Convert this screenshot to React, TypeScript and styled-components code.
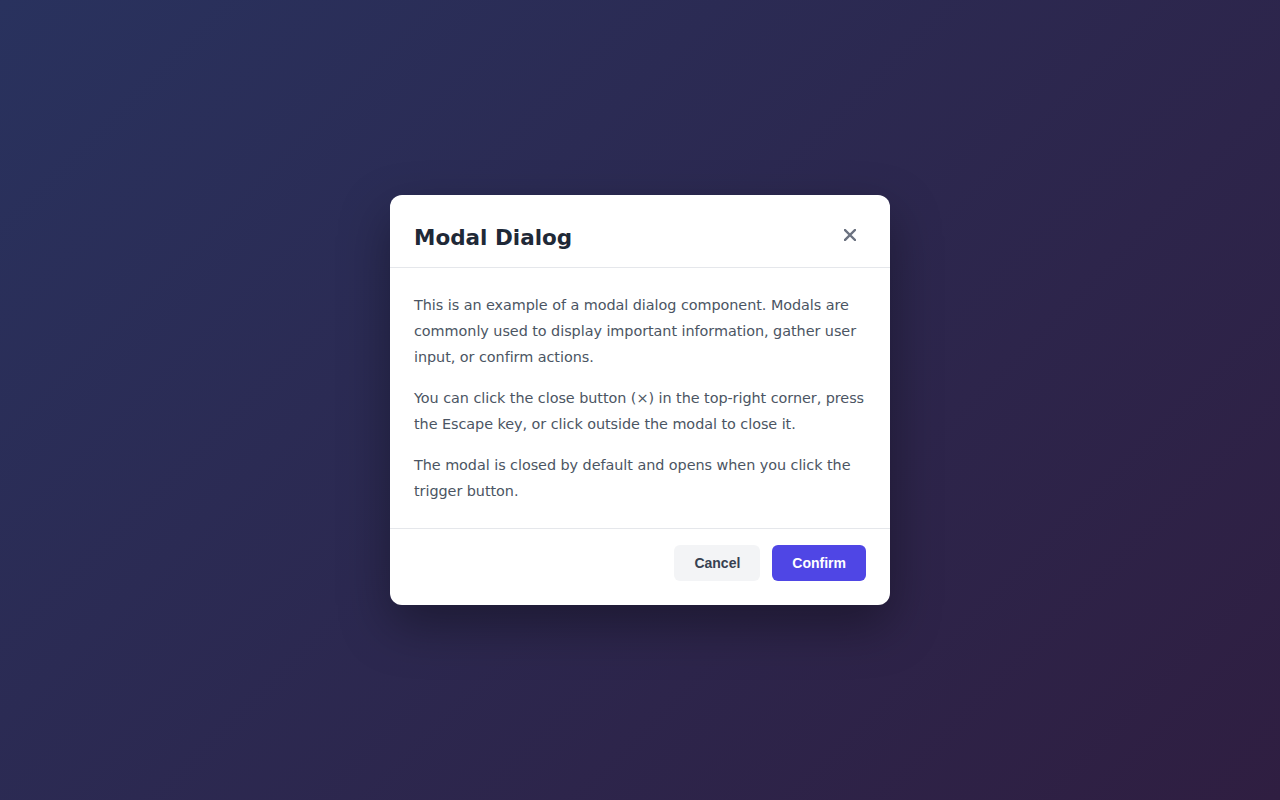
import styled, { createGlobalStyle } from 'styled-components';

const GlobalStyle = createGlobalStyle`
  html, body {
    margin: 0;
    padding: 0;
    height: 100%;
  }
  body {
    font-family: "DejaVu Sans", Verdana, sans-serif;
    background: linear-gradient(135deg, #29325e 0%, #2f1e41 100%);
    min-height: 100vh;
  }
  #root {
    min-height: 100vh;
  }
`;

const Backdrop = styled.div`
  min-height: 100vh;
  display: flex;
  align-items: center;
  justify-content: center;
`;

const Modal = styled.div`
  width: 500px;
  background: #ffffff;
  border-radius: 12px;
  box-shadow: 0 20px 50px rgba(0, 0, 0, 0.35);
  overflow: hidden;
`;

const Header = styled.div`
  display: flex;
  align-items: center;
  justify-content: space-between;
  padding: 28px 24px 14px;
  border-bottom: 1px solid #e5e7eb;
`;

const Title = styled.h2`
  margin: 0;
  font-size: 21.5px;
  line-height: 30px;
  font-weight: 700;
  color: #1f2937;
`;

const CloseButton = styled.button`
  width: 32px;
  height: 32px;
  display: flex;
  align-items: center;
  justify-content: center;
  border: none;
  background: transparent;
  color: #6b7280;
  padding: 0;
  margin-top: -7px;
  cursor: pointer;
`;

const Body = styled.div`
  padding: 24px;
  border-bottom: 1px solid #e5e7eb;
`;

const Paragraph = styled.p`
  margin: 0 0 15px;
  font-size: 14.4px;
  line-height: 26px;
  letter-spacing: -0.05px;
  color: #4b5563;

  &:last-child {
    margin-bottom: 0;
  }
`;

const Footer = styled.div`
  display: flex;
  justify-content: flex-end;
  gap: 12px;
  padding: 16px 24px 24px;
`;

const Button = styled.button<{ $primary?: boolean }>`
  height: 36px;
  padding: 0 20px;
  border: none;
  border-radius: 6px;
  font-family: "Liberation Sans", Arial, sans-serif;
  font-size: 14px;
  font-weight: 700;
  cursor: pointer;
  background: ${p => (p.$primary ? '#4f46e5' : '#f3f4f6')};
  color: ${p => (p.$primary ? '#ffffff' : '#374151')};
`;

function CloseIcon() {
  return (
    <svg width="12" height="12" viewBox="0 0 12 12" fill="none">
      <path d="M1 1 L11 11 M11 1 L1 11" stroke="currentColor" strokeWidth="2.4" strokeLinecap="square" />
    </svg>
  );
}

export default function App() {
  return (
    <>
      <GlobalStyle />
      <Backdrop>
        <Modal role="dialog" aria-modal="true">
          <Header>
            <Title>Modal Dialog</Title>
            <CloseButton aria-label="Close">
              <CloseIcon />
            </CloseButton>
          </Header>
          <Body>
            <Paragraph>
              This is an example of a modal dialog component. Modals are commonly used to display
              important information, gather user input, or confirm actions.
            </Paragraph>
            <Paragraph>
              You can click the close button (×) in the top-right corner, press the Escape key, or
              click outside the modal to close it.
            </Paragraph>
            <Paragraph>
              The modal is closed by default and opens when you click the trigger button.
            </Paragraph>
          </Body>
          <Footer>
            <Button>Cancel</Button>
            <Button $primary>Confirm</Button>
          </Footer>
        </Modal>
      </Backdrop>
    </>
  );
}
